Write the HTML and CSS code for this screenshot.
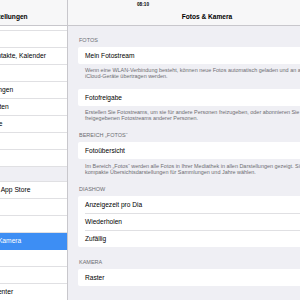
FILE: index.html
```html
<!DOCTYPE html>
<html lang="de">
<head>
  <meta charset="UTF-8">
  <meta name="viewport" content="width=device-width, initial-scale=1.0">
  <title>Fotos &amp; Kamera</title>
  <link rel="stylesheet" href="styles.css">
</head>
<body>
  <div class="screen">
    <div class="status-time">08:10</div>

    <aside class="master">
      <div class="master-inner">
        <header class="nav">
          <span class="nav-title master-title">Einstellungen</span>
        </header>
        <ul class="list">
          <li class="row cut"></li>
          <li class="row">iCloud</li>
          <li class="row">Mail, Kontakte, Kalender</li>
          <li class="row">Notizen</li>
          <li class="row">Erinnerungen</li>
          <li class="row">Nachrichten</li>
          <li class="row">FaceTime</li>
          <li class="row">Karten</li>
          <li class="row">Safari</li>
          <li class="gap"></li>
          <li class="row">iTunes &amp; App Store</li>
          <li class="row">Musik</li>
          <li class="row">Videos</li>
          <li class="row active">Fotos &amp; Kamera</li>
          <li class="row">iBooks</li>
          <li class="row">iTunes U</li>
          <li class="row">Game Center</li>
        </ul>
      </div>
    </aside>

    <main class="detail">
      <header class="nav">
        <span class="nav-title">Fotos &amp; Kamera</span>
      </header>
      <div class="content">
        <section class="section">
          <div class="section-label">Fotos</div>
          <div class="group">
            <div class="cell">Mein Fotostream</div>
          </div>
          <p class="section-footer">Wenn eine WLAN-Verbindung besteht, können neue Fotos automatisch geladen und an alle Ihre<br>iCloud-Geräte übertragen werden.</p>
        </section>

        <section class="section plain">
          <div class="group">
            <div class="cell">Fotofreigabe</div>
          </div>
          <p class="section-footer">Erstellen Sie Fotostreams, um sie für andere Personen freizugeben, oder abonnieren Sie die<br>freigegebenen Fotostreams anderer Personen.</p>
        </section>

        <section class="section">
          <div class="section-label">Bereich „Fotos“</div>
          <div class="group">
            <div class="cell">Fotoübersicht</div>
          </div>
          <p class="section-footer">Im Bereich „Fotos“ werden alle Fotos in Ihrer Mediathek in allen Darstellungen gezeigt. Sie können<br>kompakte Übersichtsdarstellungen für Sammlungen und Jahre wählen.</p>
        </section>

        <section class="section">
          <div class="section-label">Diashow</div>
          <div class="group">
            <div class="cell">Anzeigezeit pro Dia</div>
            <div class="cell">Wiederholen</div>
            <div class="cell">Zufällig</div>
          </div>
        </section>

        <section class="section wide">
          <div class="section-label">Kamera</div>
          <div class="group">
            <div class="cell">Raster</div>
          </div>
        </section>
      </div>
    </main>
  </div>
</body>
</html>
```

FILE: styles.css
```css
*{
  box-sizing: border-box;
}

html, body{
  margin: 0;
  overflow: hidden;
}

body{
  font-family: "Liberation Sans", Arial, sans-serif;
  background: #efeff4;
  color: #000;
}

.screen{
  position: relative;
  display: flex;
  width: 346px;
  height: 300px;
}

/* status bar sits over both nav bars */
.status-time{
  position: absolute;
  top: 2px;
  left: 123px;
  width: 40px;
  text-align: center;
  font-size: 4.7px;
  font-weight: 700;
  line-height: 6px;
}

.nav{
  height: 26px;
  padding-top: 8px;
  background: #f7f7f8;
  border-bottom: 1px solid #c8c7cc;
  text-align: center;
}

.nav-title{
  display: block;
  line-height: 17px;
  font-size: 6.6px;
  font-weight: 700;
}

.master-title{
  padding-left: 4px;
}

/* master list */
.master{
  flex: none;
  width: 68px;
  overflow: hidden;
  background: #fff;
  border-right: 1px solid #c8c7cc;
}

.master-inner{
  width: 128px;
  margin-left: -60px;
}

.list{
  margin: 0;
  padding: 0;
  list-style: none;
}

.row{
  height: 17px;
  padding-left: 33px;
  line-height: 16px;
  font-size: 6.7px;
  white-space: nowrap;
  border-bottom: 1px solid #e0e0e3;
}

.row.cut{
  height: 5px;
}

.row.active{
  background: #3d8ef4;
  color: #fff;
  border-bottom-color: #3d8ef4;
}

.gap{
  height: 15px;
  background: #efeff4;
  border-bottom: 1px solid #e0e0e3;
}

/* detail */
.detail{
  flex: none;
  width: 278px;
}

.content{
  padding: 0 11px 0 10px;
}

.section{
  margin-top: 11px;
}

.section:first-child{
  margin-top: 10.5px;
}

.section.plain{
  margin-top: 9.5px;
}

.section.wide{
  margin-top: 12px;
}

.section-label{
  padding: 0 0 3px 1px;
  line-height: 7px;
  font-size: 5.5px;
  color: #6d6d72;
  text-transform: uppercase;
}

.group{
  background: #fff;
  border-radius: 2px;
  overflow: hidden;
}

.cell{
  height: 17px;
  padding-left: 7px;
  line-height: 17px;
  font-size: 6.6px;
  white-space: nowrap;
}

.cell + .cell{
  background: linear-gradient(#e0e0e3, #e0e0e3) no-repeat 7px 0 / 100% 1px;
}

.section-footer{
  margin: 0;
  padding: 3.5px 7px 0;
  line-height: 6px;
  font-size: 5.45px;
  color: #6d6d72;
  white-space: nowrap;
}
```
